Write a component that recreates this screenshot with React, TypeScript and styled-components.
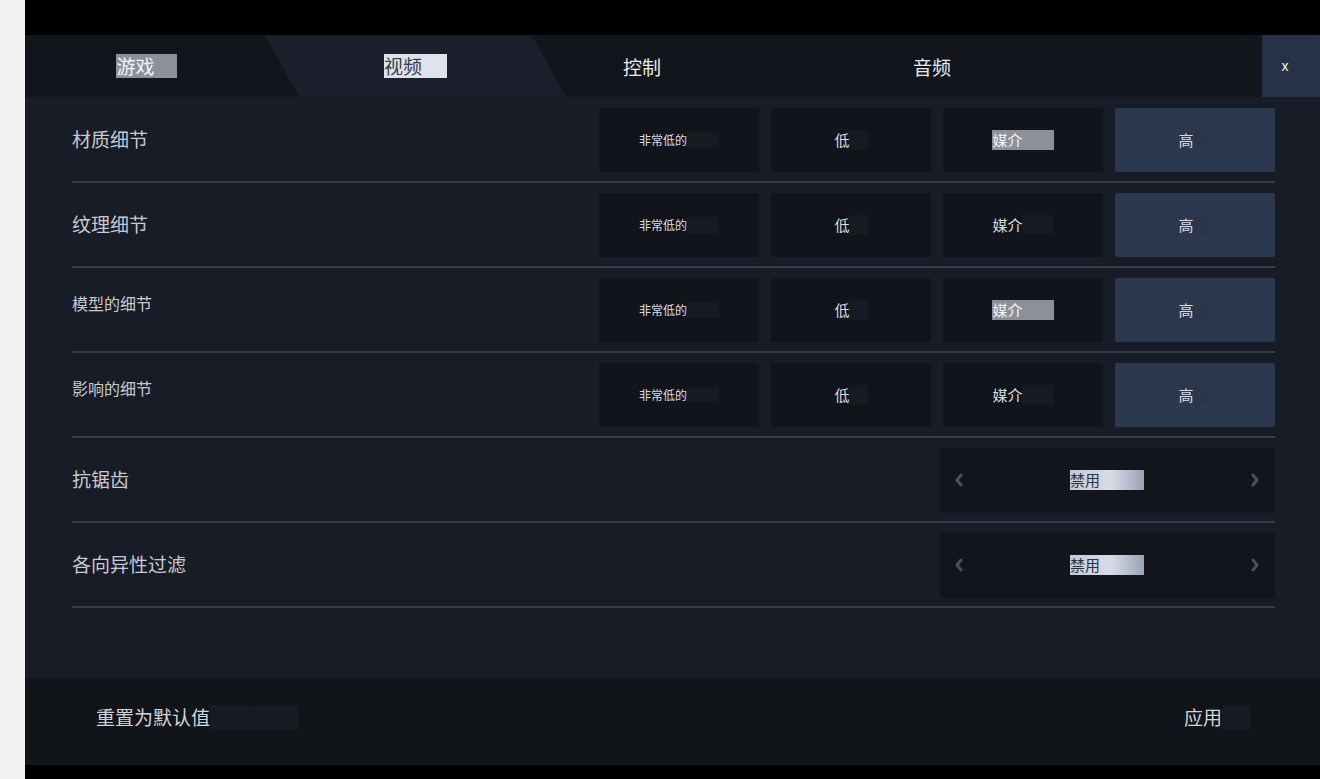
import React, { useState } from "react";
import styled, { createGlobalStyle, css } from "styled-components";

const GlobalStyle = createGlobalStyle`
	html, body {
		margin: 0;
		padding: 0;
		background: #f1f1f1;
	}
	* {
		box-sizing: border-box;
	}
	body {
		font-family: "Noto Sans CJK SC", "Noto Sans", "Liberation Sans", sans-serif;
	}
`;

type Tone = "none" | "gray" | "light" | "glow";

const tones = {
	none: css`
		background: linear-gradient(to right, transparent 0, transparent var(--text), rgba(40, 48, 64, 0.22) var(--text));
	`,
	gray: css`
		background: #8d9099;
		color: #f3f4f7;
	`,
	light: css`
		background: #dfe3ee;
		color: #3a3d44;
	`,
	glow: css`
		background: linear-gradient(to right, #c3c9d8, #d7dce8 55%, #9aa2b6);
		color: #2f333b;
	`,
};

// text with the trailing highlight box seen in the capture
const Mark = styled.span<{ $tone?: Tone; $pad?: number; $text?: number }>`
	display: inline-block;
	line-height: 1.3;
	padding-right: ${(p) => p.$pad ?? 30}px;
	--text: ${(p) => p.$text ?? 0}px;
	${(p) => tones[p.$tone ?? "none"]}
`;

const Frame = styled.div`
	margin-left: 25px;
	height: 779px;
	background: #000;
	padding: 35px 0 14px;
`;

const Panel = styled.div`
	height: 730px;
	display: flex;
	flex-direction: column;
	background: #181c27;
`;

const TabBar = styled.div`
	height: 62px;
	display: flex;
	background: #12151c;
	overflow: hidden;
`;

const Tab = styled.div<{ $w: number; $active?: boolean; $nudge?: number }>`
	position: relative;
	width: ${(p) => p.$w}px;
	display: flex;
	align-items: center;
	justify-content: center;
	padding-right: ${(p) => p.$nudge ?? 0}px;
	color: #e8eaee;
	font-size: 19px;
	cursor: pointer;
	&::before {
		content: "";
		position: absolute;
		inset: 0;
		transform: skewX(29deg);
		background: ${(p) => (p.$active ? "#1a1f2b" : "transparent")};
	}
	span {
		position: relative;
	}
`;

const TabSpacer = styled.div`
	flex: 1;
`;

const Close = styled.button`
	width: 58px;
	border: 0;
	background: #283247;
	color: #f2f3f6;
	font-family: "Liberation Sans", sans-serif;
	font-size: 14px;
	padding: 0 12px 0 0;
	cursor: pointer;
`;

const Content = styled.div`
	flex: 1;
	padding: 1px 45px 0 47px;
`;

const Row = styled.div`
	height: 85px;
	display: flex;
	align-items: center;
	justify-content: space-between;
	padding: 10px 0 9px;
	border-bottom: 2px solid #363d4c;
`;

const Label = styled.div<{ $small?: boolean }>`
	color: #c7cad1;
	font-size: ${(p) => (p.$small ? 16 : 19)}px;
	margin-bottom: ${(p) => (p.$small ? 14 : 4)}px;
`;

const Options = styled.div`
	display: grid;
	grid-template-columns: repeat(4, 160px);
	gap: 12px;
	height: 64px;
`;

const Option = styled.button<{ $active?: boolean; $tiny?: boolean }>`
	border: 0;
	border-radius: 2px;
	background: ${(p) => (p.$active ? "#2c3850" : "#11141b")};
	color: #dadde3;
	font-family: inherit;
	font-size: ${(p) => (p.$tiny ? 12 : 15)}px;
	display: flex;
	align-items: center;
	justify-content: center;
	cursor: pointer;
`;

const Selector = styled.div`
	width: 335px;
	height: 65px;
	background: #12151c;
	display: flex;
	align-items: center;
	justify-content: space-between;
	padding: 0 14px 0 13px;
	color: #dadde3;
	font-size: 15px;
`;

const Arrow = styled.button`
	border: 0;
	background: transparent;
	padding: 0;
	display: flex;
	color: #465063;
	cursor: pointer;
`;

const Footer = styled.div`
	height: 87px;
	background: #111419;
	display: flex;
	align-items: center;
	justify-content: space-between;
	padding: 0 70px 8px 71px;
	color: #d3d6dc;
	font-size: 19px;
`;

const Chevron = ({ dir }: { dir: "left" | "right" }) => (
	<svg width="12" height="18" viewBox="0 0 12 18">
		<path
			d={dir === "left" ? "M8 4 L4 9 L8 14" : "M4 4 L8 9 L4 14"}
			fill="none"
			stroke="currentColor"
			strokeWidth="3"
			strokeLinecap="round"
			strokeLinejoin="round"
		/>
	</svg>
);

const levels = [
	{ name: "非常低的", pad: 32, text: 48 },
	{ name: "低", pad: 18, text: 15 },
	{ name: "媒介", pad: 31, text: 30 },
	{ name: "高", pad: 18, text: 15 },
];

const detailRows = [
	{ label: "材质细节", small: false, mark: 2 },
	{ label: "纹理细节", small: false, mark: -1 },
	{ label: "模型的细节", small: true, mark: 2 },
	{ label: "影响的细节", small: true, mark: -1 },
];

const tabs = [
	{ name: "游戏", w: 257, tone: "gray" as Tone, pad: 22, nudge: 14 },
	{ name: "视频", w: 267, tone: "light" as Tone, pad: 25 },
	{ name: "控制", w: 186 },
	{ name: "音频", w: 394 },
];

export default function App() {
	const [tab, setTab] = useState(1);
	const [picked, setPicked] = useState<number[]>([3, 3, 3, 3]);

	return (
		<>
			<GlobalStyle />
			<Frame>
				<Panel>
					<TabBar>
						{tabs.map((t, i) => (
							<Tab key={t.name} $w={t.w} $nudge={t.nudge} $active={tab === i} onClick={() => setTab(i)}>
								{t.tone ? (
									<Mark $tone={t.tone} $pad={t.pad}>
										{t.name}
									</Mark>
								) : (
									<span>{t.name}</span>
								)}
							</Tab>
						))}
						<TabSpacer />
						<Close>x</Close>
					</TabBar>

					<Content>
						{detailRows.map((r, ri) => (
							<Row key={r.label}>
								<Label $small={r.small}>{r.label}</Label>
								<Options>
									{levels.map((lv, li) => (
										<Option
											key={lv.name}
											$tiny={li === 0}
											$active={picked[ri] === li}
											onClick={() => setPicked((p) => p.map((v, k) => (k === ri ? li : v)))}
										>
											<Mark $tone={r.mark === li ? "gray" : "none"} $pad={lv.pad} $text={lv.text}>
												{lv.name}
											</Mark>
										</Option>
									))}
								</Options>
							</Row>
						))}
						{["抗锯齿", "各向异性过滤"].map((label) => (
							<Row key={label}>
								<Label>{label}</Label>
								<Selector>
									<Arrow>
										<Chevron dir="left" />
									</Arrow>
									<Mark $tone="glow" $pad={44}>
										禁用
									</Mark>
									<Arrow>
										<Chevron dir="right" />
									</Arrow>
								</Selector>
							</Row>
						))}
					</Content>

					<Footer>
						<Mark $pad={88} $text={114}>
							重置为默认值
						</Mark>
						<Mark $pad={28} $text={38}>
							应用
						</Mark>
					</Footer>
				</Panel>
			</Frame>
		</>
	);
}
